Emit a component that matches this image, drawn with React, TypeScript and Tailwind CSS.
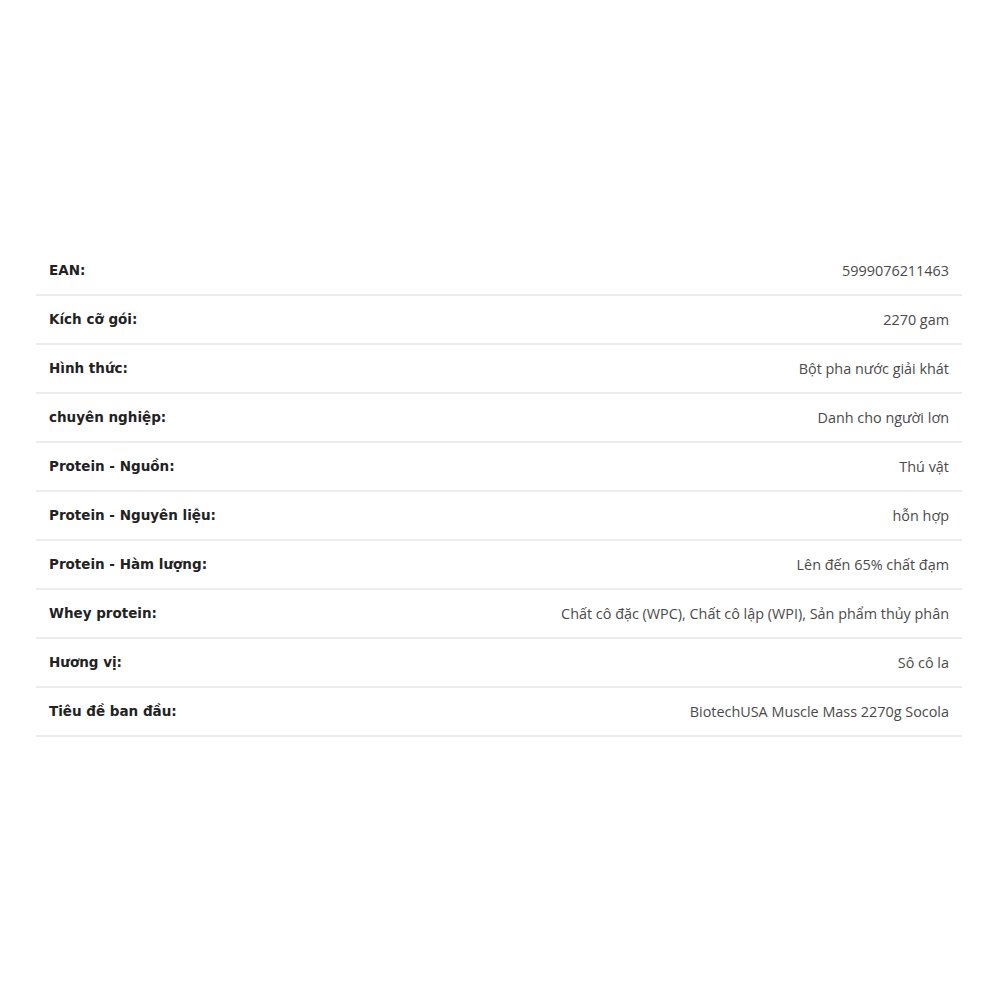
const rows: [string, string][] = [
  ['EAN:', '5999076211463'],
  ['Kích cỡ gói:', '2270 gam'],
  ['Hình thức:', 'Bột pha nước giải khát'],
  ['chuyên nghiệp:', 'Danh cho người lơn'],
  ['Protein - Nguồn:', 'Thú vật'],
  ['Protein - Nguyên liệu:', 'hỗn hợp'],
  ['Protein - Hàm lượng:', 'Lên đến 65% chất đạm'],
  ['Whey protein:', 'Chất cô đặc (WPC), Chất cô lập (WPI), Sản phẩm thủy phân'],
  ['Hương vị:', 'Sô cô la'],
  ['Tiêu đề ban đầu:', 'BiotechUSA Muscle Mass 2270g Socola'],
];

export default function App() {
  return (
    <div className="h-[1000px] w-[1000px] bg-white">
      <div className="ml-[36px] w-[926px] pt-[247px]">
        {rows.map(([label, value]) => (
          <div
            key={label}
            className="flex h-[49px] items-center justify-between border-b-2 border-[#ececec] px-[13px]"
          >
            <span className="font-['DejaVu_Sans',sans-serif] text-[13.5px] font-bold text-[#222]">{label}</span>
            <span className="font-['Open_Sans',sans-serif] text-[14.4px] text-[#4a4a4a]">{value}</span>
          </div>
        ))}
      </div>
    </div>
  );
}
